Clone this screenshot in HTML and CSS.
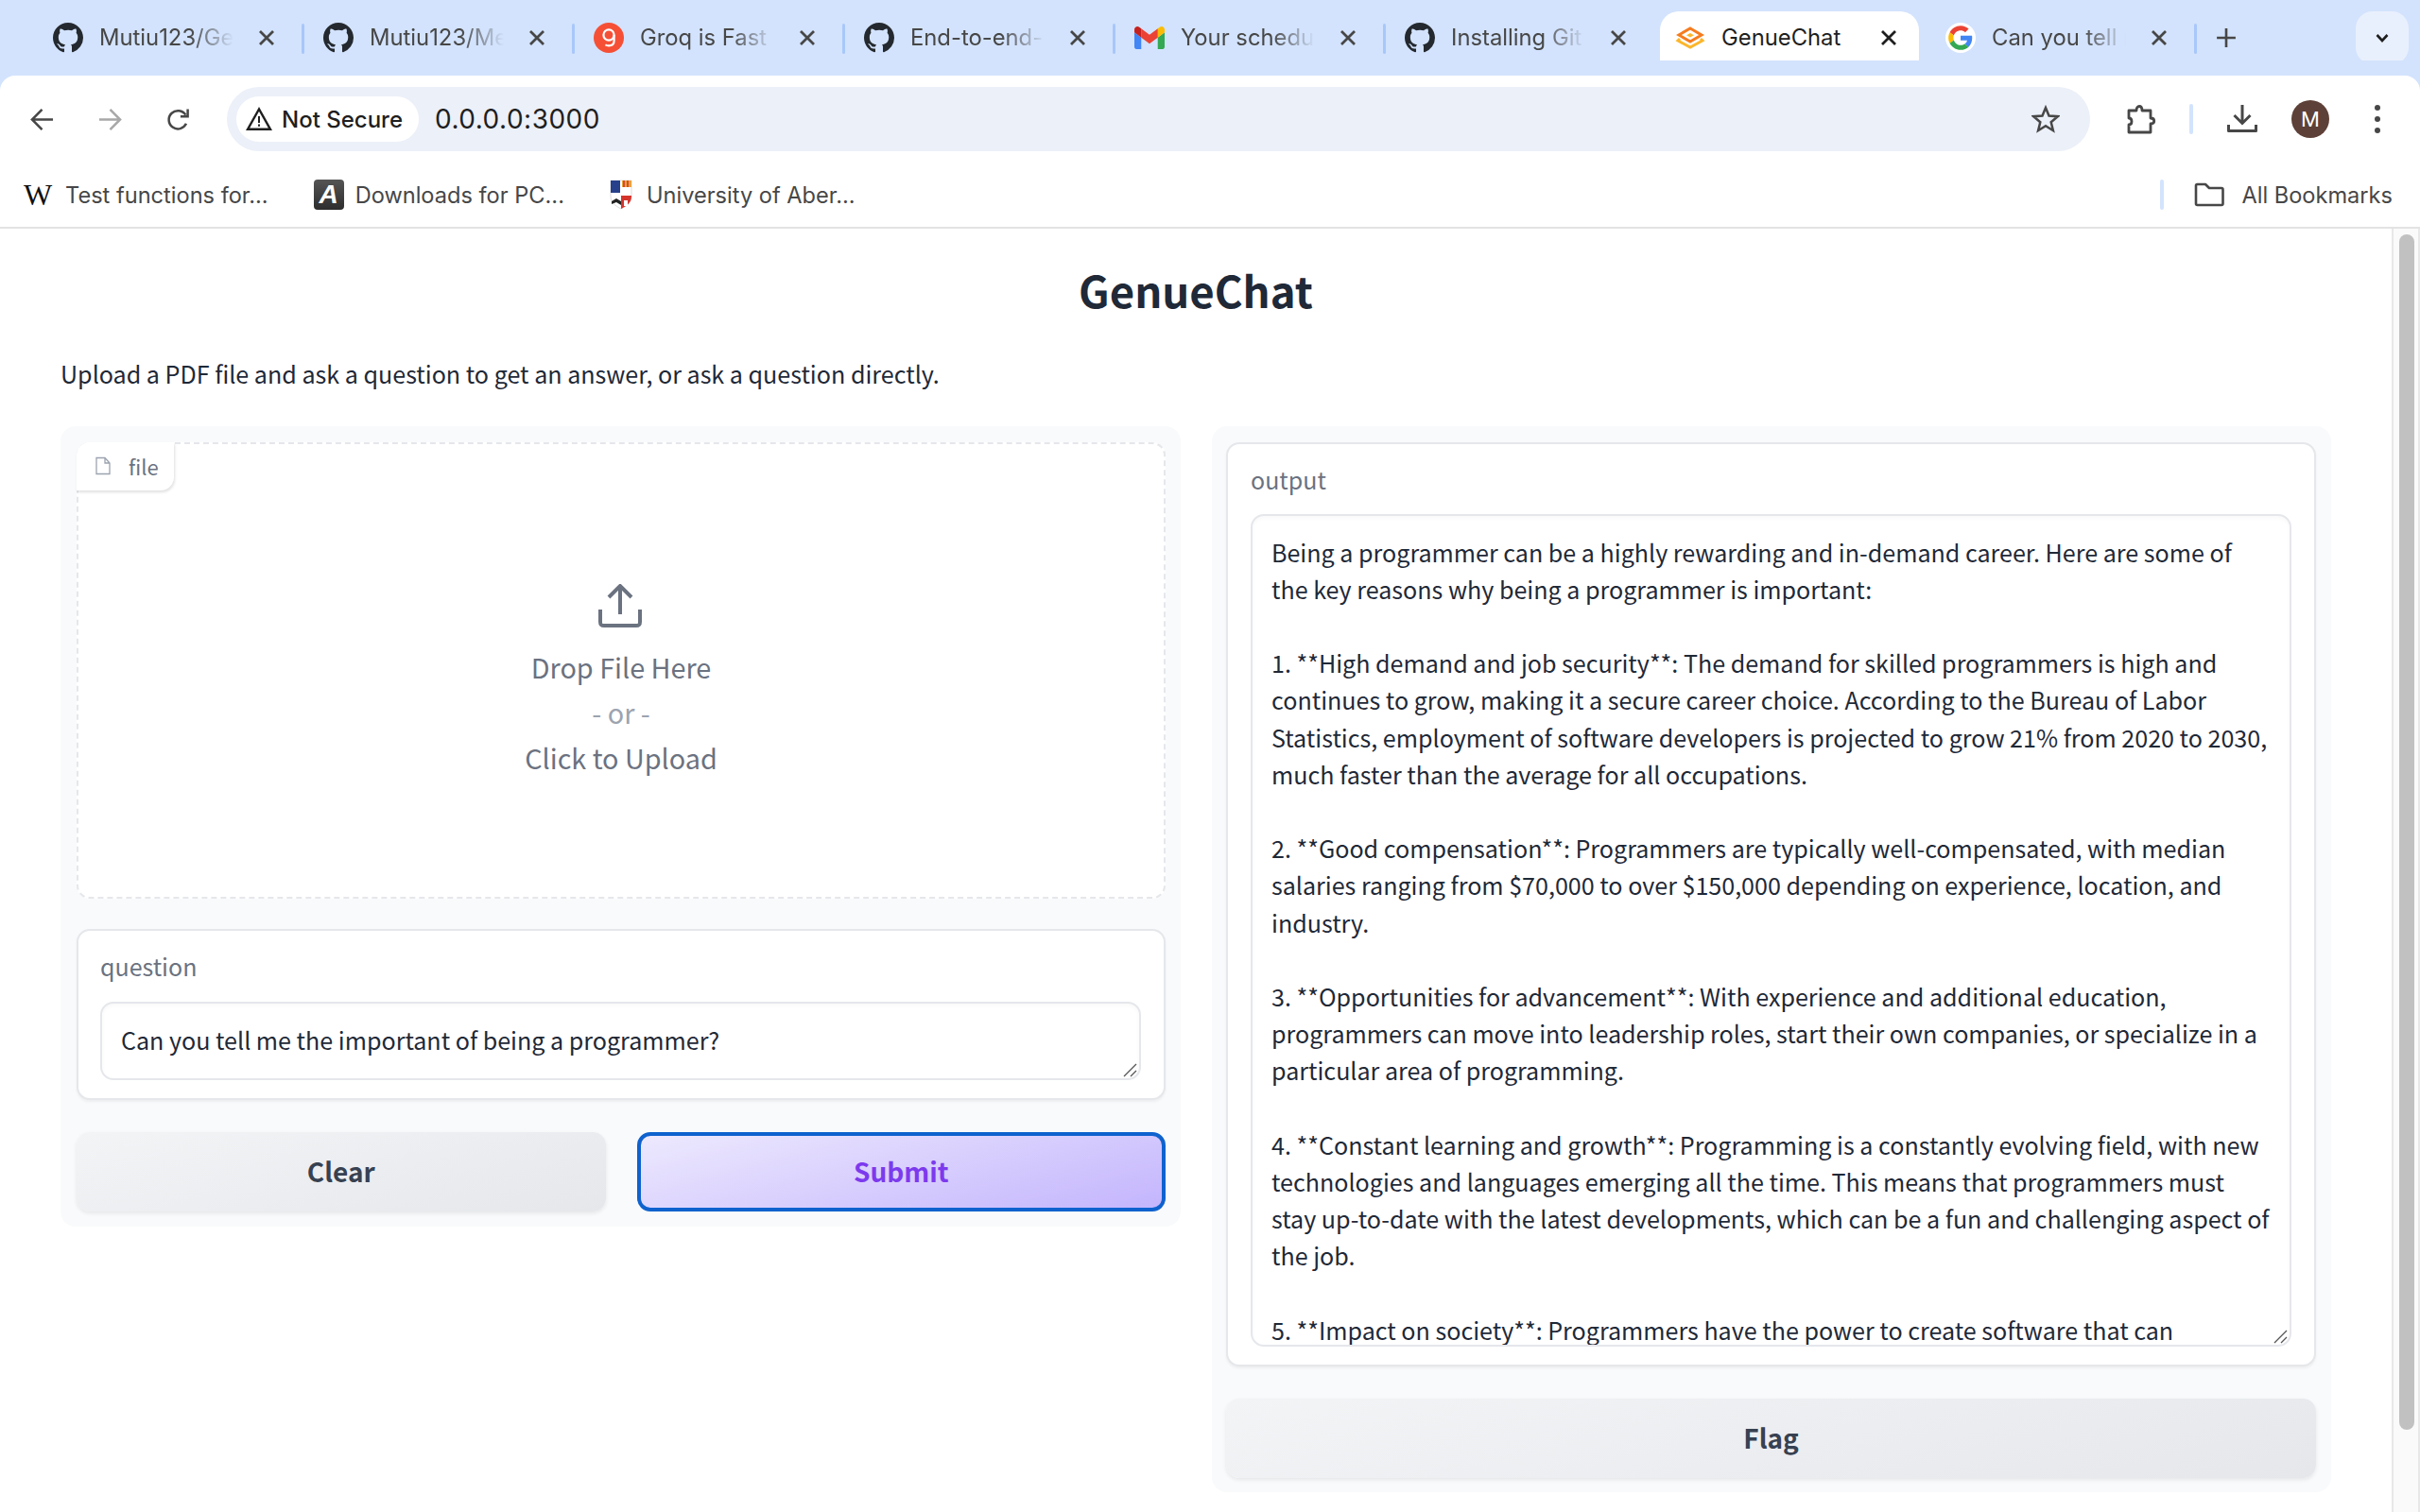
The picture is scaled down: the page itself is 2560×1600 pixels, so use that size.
FILE: index.html
```html
<!DOCTYPE html>
<html lang="en">
<head>
    <meta charset="UTF-8" />
    <title>GenueChat</title>
    <link rel="stylesheet" href="styles.css">
</head>
<body>
    <svg class="defs" width="0" height="0">
        <symbol id="gh" viewBox="0 0 16 16"><path fill="#24292f" d="M8 0C3.58 0 0 3.58 0 8c0 3.54 2.29 6.53 5.47 7.59.4.07.55-.17.55-.38 0-.19-.01-.82-.01-1.49-2.01.37-2.53-.49-2.69-.94-.09-.23-.48-.94-.82-1.13-.28-.15-.68-.52-.01-.53.63-.01 1.08.58 1.23.82.72 1.21 1.87.87 2.33.66.07-.52.28-.87.51-1.07-1.78-.2-3.64-.89-3.64-3.95 0-.87.31-1.59.82-2.15-.08-.2-.36-1.02.08-2.12 0 0 .67-.21 2.2.82.64-.18 1.32-.27 2-.27.68 0 1.36.09 2 .27 1.53-1.04 2.2-.82 2.2-.82.44 1.1.16 1.92.08 2.12.51.56.82 1.27.82 2.15 0 3.07-1.87 3.75-3.65 3.95.29.25.54.73.54 1.48 0 1.07-.01 1.93-.01 2.2 0 .21.15.46.55.38A8.013 8.013 0 0016 8c0-4.42-3.58-8-8-8z"/></symbol>
        <symbol id="x" viewBox="0 0 16 16"><path d="M1 1l14 14M15 1L1 15" fill="none" stroke="currentColor" stroke-width="2.8"/></symbol>
        <symbol id="grip" viewBox="0 0 16 16"><path d="M1 14L14 1M8 14l6-6" fill="none" stroke="#555" stroke-width="1.3"/></symbol>
    </svg>

    <!-- tab strip -->
    <div class="tabstrip">
        <div class="tab">
            <svg class="favicon"><use href="#gh"/></svg>
            <span class="tab-title">Mutiu123/GenueChat</span>
            <svg class="tab-close"><use href="#x"/></svg>
        </div>
        <div class="tab">
            <svg class="favicon"><use href="#gh"/></svg>
            <span class="tab-title">Mutiu123/Medical</span>
            <svg class="tab-close"><use href="#x"/></svg>
        </div>
        <div class="tab">
            <svg class="favicon" viewBox="0 0 32 32">
                <circle cx="16" cy="16" r="16" fill="#f55036"/>
                <circle cx="16" cy="13" r="5.6" fill="none" stroke="#fff" stroke-width="2.2"/>
                <path d="M21.6 13v6c0 3.6-2.4 5.4-5.6 5.4-1.4 0-2.6-.4-3.6-1" fill="none" stroke="#fff" stroke-width="2.2"/>
            </svg>
            <span class="tab-title">Groq is Fast AI</span>
            <svg class="tab-close"><use href="#x"/></svg>
        </div>
        <div class="tab">
            <svg class="favicon"><use href="#gh"/></svg>
            <span class="tab-title">End-to-end-Medical</span>
            <svg class="tab-close"><use href="#x"/></svg>
        </div>
        <div class="tab">
            <svg class="favicon" viewBox="52 42 88 66">
                <path fill="#4285f4" d="M58 108h14V74L52 59v43c0 3.32 2.69 6 6 6"/>
                <path fill="#34a853" d="M120 108h14c3.32 0 6-2.69 6-6V59l-20 15"/>
                <path fill="#fbbc04" d="M120 48v26l20-15v-8c0-7.42-8.47-11.65-14.4-7.2"/>
                <path fill="#ea4335" d="M72 74V48l24 18 24-18v26L96 92"/>
                <path fill="#c5221f" d="M52 51v8l20 15V48l-5.6-4.2c-5.94-4.45-14.4-.22-14.4 7.2"/>
            </svg>
            <span class="tab-title">Your scheduled</span>
            <svg class="tab-close"><use href="#x"/></svg>
        </div>
        <div class="tab">
            <svg class="favicon"><use href="#gh"/></svg>
            <span class="tab-title">Installing Git LFS</span>
            <svg class="tab-close"><use href="#x"/></svg>
        </div>
        <div class="tab tab-active">
            <svg class="favicon" viewBox="0 0 32 32">
                <path d="M16 6l12 7-12 7-12-7z" fill="none" stroke="#f57c1f" stroke-width="3"/>
                <path d="M5 17l-2 2 13 7 13-7-2-2" fill="none" stroke="#fbb62c" stroke-width="3"/>
                <path d="M16 11l4 2.2-4 2.200-4-2.200z" fill="#fbb62c"/>
            </svg>
            <span class="tab-title">GenueChat</span>
            <svg class="tab-close"><use href="#x"/></svg>
        </div>
        <div class="tab">
            <svg class="favicon favicon-g" viewBox="-6 -6 60 60">
                <path fill="#EA4335" d="M24 9.5c3.54 0 6.71 1.22 9.21 3.6l6.85-6.85C35.9 2.38 30.47 0 24 0 14.62 0 6.51 5.38 2.56 13.22l7.98 6.19C12.43 13.72 17.74 9.5 24 9.5z"/>
                <path fill="#4285F4" d="M46.98 24.55c0-1.57-.15-3.09-.38-4.55H24v9.02h12.94c-.58 2.96-2.26 5.48-4.78 7.18l7.73 6c4.51-4.18 7.09-10.36 7.09-17.65z"/>
                <path fill="#FBBC05" d="M10.53 28.59c-.48-1.45-.76-2.99-.76-4.59s.27-3.14.76-4.59l-7.98-6.19C.92 16.46 0 20.12 0 24c0 3.88.92 7.54 2.56 10.78l7.97-6.19z"/>
                <path fill="#34A853" d="M24 48c6.48 0 11.93-2.13 15.89-5.81l-7.73-6c-2.15 1.45-4.92 2.3-8.16 2.3-6.26 0-11.57-4.22-13.47-9.91l-7.98 6.19C6.51 42.62 14.62 48 24 48z"/>
            </svg>
            <span class="tab-title">Can you tell me</span>
            <svg class="tab-close"><use href="#x"/></svg>
        </div>
        <svg class="new-tab" viewBox="0 0 20 20"><path d="M10 1v18M1 10h18" fill="none" stroke="#474747" stroke-width="2.4"/></svg>
        <div class="tab-search">
            <svg viewBox="0 0 16 16"><path d="M2.5 5L8 11l5.5-6" fill="none" stroke="#1f1f1f" stroke-width="2.6"/></svg>
        </div>
    </div>

    <!-- toolbar -->
    <div class="toolbar">
        <div class="nav-btn">
            <svg viewBox="0 0 26 26"><path d="M25 13H3M13 2L2 13l11 11" fill="none" stroke="#474747" stroke-width="2.6"/></svg>
        </div>
        <div class="nav-btn nav-off">
            <svg viewBox="0 0 26 26"><path d="M1 13h22M13 2l11 11-11 11" fill="none" stroke="#a8a8a8" stroke-width="2.6"/></svg>
        </div>
        <div class="nav-btn">
            <svg viewBox="0 0 26 26"><path d="M21.8 17.5a10 10 0 1 1-.6-9.5M23.5 1.5v8h-8" fill="none" stroke="#474747" stroke-width="2.6"/></svg>
        </div>
        <div class="address">
            <div class="secure-pill">
                <svg viewBox="0 0 28 26"><path d="M14 2.5L2 23.8h24z" fill="none" stroke="#1f1f1f" stroke-width="2.4"/><path d="M14 10v7M14 18.5v2.2" stroke="#1f1f1f" stroke-width="2"/></svg>
                <span>Not Secure</span>
            </div>
            <span class="url">0.0.0.0:3000</span>
            <svg class="star" viewBox="0 0 30 30"><path d="M15 3l3.5 8.5 9.3.7-7.1 6 2.2 9L15 22.3l-7.9 4.9 2.2-9-7.1-6 9.3-.7z" fill="none" stroke="#474747" stroke-width="2.5"/></svg>
        </div>
        <div class="tool-icons">
            <svg class="puzzle" viewBox="0 0 32 32"><path d="M3 7h8c0-6 6-6 6 0h9v8c5 0 5 6 0 6v9H3v-8c4 0 4-7 0-7z" fill="none" stroke="#474747" stroke-width="2.8" stroke-linejoin="round"/></svg>
            <span class="tool-sep"></span>
            <svg class="download" viewBox="0 0 32 32"><path d="M16 1v19M7.5 12L16 20.5 24.5 12" fill="none" stroke="#474747" stroke-width="3"/><path d="M1.5 22v6.5h29V22" fill="none" stroke="#474747" stroke-width="3" stroke-linejoin="round"/></svg>
            <span class="avatar">M</span>
            <span class="dots"><i></i><i></i><i></i></span>
        </div>
    </div>

    <!-- bookmarks bar -->
    <div class="bookmarks">
        <div class="bookmark">
            <span class="wiki-icon">W</span>
            <span>Test functions for...</span>
        </div>
        <div class="bookmark">
            <span class="a-icon">A</span>
            <span>Downloads for PC...</span>
        </div>
        <div class="bookmark">
            <svg class="shield" viewBox="0 0 24 32">
                <path d="M1 1h22v17c0 6-5 10-11 13C6 28 1 24 1 18z" fill="#fff" stroke="#ddd"/>
                <path d="M1 1h10v13H1z" fill="#27408b"/>
                <path d="M13 1h10v7H13z" fill="#e8a33d"/>
                <path d="M15 1v7M19 1v7" stroke="#d4342c" stroke-width="1.6"/>
                <path d="M12 17h11v1c0 6-5 10-11 13z" fill="#d4342c"/>
                <path d="M2 23l5-3 5 3v4l-5-3-5 2z" fill="#222"/>
                <path d="M15 22h4v6h-4z" fill="#fff"/>
            </svg>
            <span>University of Aber...</span>
        </div>
        <span class="bookmarks-spacer"></span>
        <span class="tool-sep"></span>
        <div class="bookmark all-bookmarks">
            <svg viewBox="0 0 32 26"><path d="M2 3.5C2 2.5 2.5 2 3.500 2H12l4 4h13c1 0 1.500.5 1.500 1.500v15c0 1-.5 1.500-1.500 1.500H3.500C2.500 24 2 23.500 2 22.500z" fill="none" stroke="#474747" stroke-width="2.6" stroke-linejoin="round"/></svg>
            <span>All Bookmarks</span>
        </div>
    </div>

    <div class="viewport">
        <main class="page">
            <h1>GenueChat</h1>
            <p class="intro">Upload a PDF file and ask a question to get an answer, or ask a question directly.</p>

            <div class="columns">
                <section class="panel">
                    <div class="dropzone">
                        <div class="file-label">
                            <svg viewBox="0 0 16 20"><path d="M1 1.5h9l5 5.5v11.500H1zM10 1.500V7h5" fill="none" stroke="#9ca3af" stroke-width="1.3"/></svg>
                            <span>file</span>
                        </div>
                        <svg class="upload-icon" viewBox="0 0 46 46"><path d="M23 32V3M11 14L23 2l12 12" fill="none" stroke="#6b7280" stroke-width="4"/><path d="M2 27v13c0 3 1 4 4 4h34c3 0 4-1 4-4V27" fill="none" stroke="#6b7280" stroke-width="4"/></svg>
                        <div class="drop-text">Drop File Here</div>
                        <div class="drop-text drop-or">- or -</div>
                        <div class="drop-text">Click to Upload</div>
                    </div>

                    <div class="block question">
                        <label class="block-label">question</label>
                        <div class="input-wrap question-wrap">
                            <textarea class="input question-input" readonly>Can you tell me the important of being a programmer?</textarea>
                            <svg class="grip"><use href="#grip"/></svg>
                        </div>
                    </div>

                    <div class="actions">
                        <button class="btn">Clear</button>
                        <button class="btn btn-primary">Submit</button>
                    </div>
                </section>

                <section class="panel panel-right">
                    <div class="block output">
                        <label class="block-label">output</label>
                        <div class="input-wrap output-wrap">
                            <textarea class="input output-input" readonly>Being a programmer can be a highly rewarding and in-demand career. Here are some of
the key reasons why being a programmer is important:

1. **High demand and job security**: The demand for skilled programmers is high and
continues to grow, making it a secure career choice. According to the Bureau of Labor
Statistics, employment of software developers is projected to grow 21% from 2020 to 2030,
much faster than the average for all occupations.

2. **Good compensation**: Programmers are typically well-compensated, with median
salaries ranging from $70,000 to over $150,000 depending on experience, location, and
industry.

3. **Opportunities for advancement**: With experience and additional education,
programmers can move into leadership roles, start their own companies, or specialize in a
particular area of programming.

4. **Constant learning and growth**: Programming is a constantly evolving field, with new
technologies and languages emerging all the time. This means that programmers must
stay up-to-date with the latest developments, which can be a fun and challenging aspect of
the job.

5. **Impact on society**: Programmers have the power to create software that can</textarea>
                            <svg class="grip"><use href="#grip"/></svg>
                        </div>
                    </div>
                    <button class="btn btn-flag">Flag</button>
                </section>
            </div>
        </main>
        <div class="scrollbar"><div class="scroll-thumb"></div></div>
    </div>
</body>
</html>
```

FILE: styles.css
```css
* { box-sizing: border-box; }
html, body { margin: 0; height: 1600px; overflow: hidden; }
body { background: #fff; font-family: "Noto Sans CJK SC", "Noto Sans", sans-serif; color: #1f2937; }
.defs { position: absolute; }

/* browser chrome */
.tabstrip { height: 80px; background: #d3e3fd; display: flex; padding-left: 34px; font-family: Inter, sans-serif; position: relative; }
.tab { width: 286px; height: 80px; display: flex; align-items: flex-start; padding: 24px 0 0 22px; position: relative; font-size: 23.8px; color: #474747; }
.tab::after { content: ""; position: absolute; right: -2px; top: 25px; width: 3px; height: 32px; border-radius: 2px; background: #a8c7fa; }
.tab:nth-child(6)::after, .tab-active::after { display: none; }
.favicon { width: 32px; height: 32px; flex: none; }
.tab-title { width: 142px; margin-left: 17px; height: 32px; line-height: 32px; white-space: nowrap; overflow: hidden; -webkit-mask-image: linear-gradient(to right, #000 68%, transparent); mask-image: linear-gradient(to right, #000 68%, transparent); }
.tab-close { width: 16px; height: 16px; margin: 8px 0 0 27px; color: #474747; flex: none; }
.tab-active { background: #fff; width: 274px; margin: 12px 6px 0; padding: 12px 0 0 16px; height: 68px; border-radius: 20px 20px 0 0; color: #1f1f1f; }
.tab-active .tab-title { mask-image: none; -webkit-mask-image: none; }
.tab-active .tab-close { color: #1f1f1f; }
.tab-active::before { content: ""; position: absolute; left: -16px; right: -16px; bottom: 0; height: 16px; background:
    radial-gradient(circle at 0 0, #d3e3fd 16px, #fff 16.5px) left bottom / 16px 16px no-repeat,
    radial-gradient(circle at 100% 0, #d3e3fd 16px, #fff 16.5px) right bottom / 16px 16px no-repeat; }
.favicon-g { background: #fff; border-radius: 50%; }
.new-tab { width: 22px; height: 22px; margin: 29px 0 0 22px; flex: none; }
.tab-search { width: 56px; height: 56px; margin: 12px 0 0 126px; border-radius: 18px; background: #e9f0fd; display: flex; align-items: center; justify-content: center; }
.tab-search svg { width: 16px; height: 16px; }

.toolbar { height: 80px; background: #fff; display: flex; align-items: flex-start; padding: 12px 0 0 8px; position: relative; border-radius: 16px 16px 0 0; box-shadow: 0 -16px 0 #d3e3fd; }
.nav-btn { width: 72px; height: 68px; display: flex; align-items: center; justify-content: center; flex: none; }
.nav-btn svg { width: 25px; height: 25px; }
.address { width: 1971px; height: 68px; margin-left: 16px; border-radius: 34px; background: #ecf0f8; display: flex; align-items: center; padding-left: 10px; font-family: Inter, sans-serif; flex: none; }
.secure-pill { width: 193px; height: 48px; border-radius: 24px; background: #fff; display: flex; align-items: center; padding-left: 10px; font-size: 24px; font-weight: 500; color: #1f1f1f; flex: none; }
.secure-pill svg { width: 28px; height: 26px; margin-right: 10px; flex: none; }
.url { margin-left: 17px; font-size: 28px; color: #1f1f1f; letter-spacing: 0.5px; }
.star { width: 30px; height: 30px; margin-left: auto; margin-right: 32px; }
.tool-icons { display: flex; align-items: center; height: 68px; flex: 1; padding-left: 38px; }
.puzzle { width: 32px; height: 32px; flex: none; }
.tool-sep { width: 4px; height: 32px; border-radius: 2px; background: #d3e3fd; flex: none; }
.tool-icons .tool-sep { margin: 0 36px 0 35px; }
.download { width: 32px; height: 32px; flex: none; }
.avatar { width: 40px; height: 40px; margin-left: 36px; border-radius: 50%; background: #5d4037; color: #fff; font-family: Inter, sans-serif; font-size: 22px; line-height: 40px; text-align: center; flex: none; }
.dots { display: flex; flex-direction: column; gap: 6px; margin-left: 48px; }
.dots i { width: 6px; height: 6px; border-radius: 50%; background: #474747; }

.bookmarks { height: 82px; border-bottom: 2px solid #e3e3e3; background: #fff; display: flex; align-items: center; padding: 12px 29px 0 25px; font-family: Inter, sans-serif; font-size: 23.6px; color: #474747; }
.bookmark { display: flex; align-items: center; margin-right: 48px; white-space: nowrap; }
.wiki-icon { width: 30px; margin-right: 14px; font-family: "Liberation Serif", serif; font-size: 32px; line-height: 32px; color: #111; text-align: center; }
.a-icon { width: 32px; height: 32px; margin-right: 12px; border-radius: 4px; background: linear-gradient(#555, #2d2d2d); color: #fff; font-family: "Liberation Sans", sans-serif; font-size: 28px; font-weight: 700; font-style: italic; line-height: 32px; text-align: center; }
.shield { width: 24px; height: 32px; margin-right: 15px; }
.bookmarks-spacer { flex: 1; }
.all-bookmarks { margin: 0 0 0 32px; }
.all-bookmarks svg { width: 32px; height: 26px; margin-right: 18px; }

/* page */
.viewport { display: flex; height: 1358px; }
.page { flex: 1; padding: 0 64px; }
h1 { margin: 39px 0 0; font-size: 45.5px; line-height: 50px; font-weight: 600; text-align: center; color: #1f2937; }
.intro { margin: 44px 0 0; font-size: 25.08px; line-height: 40px; color: #1f2937; }
.columns { margin-top: 36px; display: grid; grid-template-columns: 1185px 1184px; gap: 33px; align-items: start; }
.panel { background: #f9fafb; border-radius: 16px; padding: 17px 16px 16px 17px; }
.panel-right { padding: 17px 16px 15px 15px; }

.dropzone { height: 483px; border: 2px dashed #e5e7eb; border-radius: 14px; background: #fff; position: relative; display: flex; flex-direction: column; align-items: center; padding-top: 148px; }
.file-label { position: absolute; left: -2px; top: -2px; width: 103px; height: 51px; display: flex; align-items: center; padding: 0 0 2px 20px; background: #fff; border-radius: 14px 0 14px 0; box-shadow: 1px 2px 3px rgba(0, 0, 0, .12); font-size: 22px; color: #6b7280; }
.file-label svg { width: 16px; height: 20px; margin-right: 19px; }
.upload-icon { width: 46px; height: 46px; margin: 0 3px 18px 0; }
.drop-text { font-size: 28.8px; line-height: 47px; color: #6b7280; }
.drop-or { color: #9ca3af; line-height: 49px; }

.block { background: #fff; border: 2px solid #e5e7eb; border-radius: 14px; box-shadow: 0 2px 3px rgba(0, 0, 0, .05); padding: 20px 24px 20px 23px; }
.block-label { display: block; font-size: 25px; line-height: 34px; color: #6b7280; }
.input-wrap { position: relative; }
.input { display: block; width: 100%; height: 100%; border: 2px solid #e5e7eb; border-radius: 14px; box-shadow: inset 0 2px 4px rgba(0, 0, 0, .03); background: #fff; color: #1f2937; font-family: inherit; font-size: 25.08px; line-height: 39.2px; padding: 18.5px 20px; outline: none; overflow: hidden; resize: none; white-space: pre; }
.grip { position: absolute; right: 3px; bottom: 2px; width: 16px; height: 16px; }
.question { margin-top: 32px; height: 181px; }
.question-wrap { height: 83px; margin-top: 21px; }
.output { height: 978px; padding-left: 24px; }
.output-wrap { height: 881px; margin-top: 20px; }

.actions { display: grid; grid-template-columns: 1fr 1fr; gap: 33px; margin-top: 34px; }
.btn { height: 84px; border: none; border-radius: 14px; padding: 0 0 3px; background: linear-gradient(165deg, #f3f4f6, #e5e7eb); box-shadow: 0 2px 4px rgba(0, 0, 0, .08); font-family: inherit; font-size: 28px; font-weight: 600; color: #374151; }
.btn-primary { border: 4px solid #0f62ce; background: linear-gradient(165deg, #ede9fe, #c4b5fd); color: #7c3aed; box-shadow: none; }
.btn-flag { display: block; width: 100%; margin-top: 34px; }

.scrollbar { width: 30px; border-left: 2px solid #e8e8e8; border-right: 2px solid #e8e8e8; background: #fafafa; padding: 6px 4px 0 6px; }
.scroll-thumb { width: 16px; height: 1265px; border-radius: 8px; background: #c1c1c1; }
```
